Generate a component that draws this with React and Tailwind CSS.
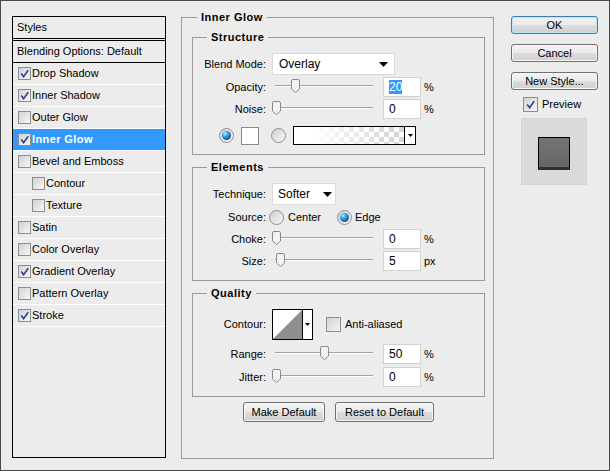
import React from 'react';

const items = [
  { label: 'Drop Shadow', checked: true },
  { label: 'Inner Shadow', checked: true },
  { label: 'Outer Glow' },
  { label: 'Inner Glow', checked: true, active: true },
  { label: 'Bevel and Emboss' },
  { label: 'Contour', indent: true },
  { label: 'Texture', indent: true },
  { label: 'Satin' },
  { label: 'Color Overlay' },
  { label: 'Gradient Overlay', checked: true },
  { label: 'Pattern Overlay' },
  { label: 'Stroke', checked: true },
];

function CheckMark() {
  return (
    <svg width="9" height="9" viewBox="0 0 9 9" className="block">
      <path d="M1.2 4.6 L3.6 7.6 L8.2 1.2" fill="none" stroke="#2c3f98" strokeWidth="1.6" />
    </svg>
  );
}

function Check({ on, big }) {
  return (
    <span
      className={`flex shrink-0 items-center justify-center border border-[#8d8d8d] bg-[linear-gradient(135deg,#d2d2d2,#f6f6f6)] ${
        big ? 'h-[15px] w-[15px]' : 'h-[13px] w-[13px]'
      }`}
    >
      {on && <CheckMark />}
    </span>
  );
}

function Radio({ on }) {
  return (
    <span className="flex h-[15px] w-[15px] shrink-0 items-center justify-center rounded-full border border-[#8e8f8f] bg-[linear-gradient(135deg,#cfcfcf,#f8f8f8)]">
      {on && (
        <span className="h-[9px] w-[9px] rounded-full bg-[radial-gradient(circle_at_35%_30%,#c8ecff_0%,#40a6e6_30%,#0c5f9c_70%,#073a63_100%)]" />
      )}
    </span>
  );
}

function Tri({ w = 9, h = 5 }) {
  return (
    <svg width={w} height={h} viewBox={`0 0 ${w} ${h}`} className="block shrink-0">
      <polygon points={`0,0 ${w},0 ${w / 2},${h}`} fill="#000" />
    </svg>
  );
}

function Legend({ children, outer }) {
  return (
    <span
      className={`absolute -top-[8px] bg-[#ececec] px-[4px] font-bold leading-[14px] tracking-[0.5px] ${
        outer ? 'left-[15px]' : 'left-[14px]'
      }`}
    >
      {children}
    </span>
  );
}

function Group({ title, className, children }) {
  return (
    <div className={`relative flex w-[293px] shrink-0 flex-col border border-[#9b9b9b] pt-[15px] ${className}`}>
      <Legend>{title}</Legend>
      {children}
    </div>
  );
}

function Label({ children }) {
  return <span className="w-[73px] shrink-0 text-right">{children}</span>;
}

function Field({ value, selected }) {
  return (
    <div className="ml-[7px] flex h-[20px] w-[38px] shrink-0 items-center border border-[#d2d2d2] bg-white pl-[5px] text-[12px]">
      {selected ? <span className="bg-[#3399ff] leading-[14px] text-white">{value}</span> : value}
    </div>
  );
}

function Slider({ pos }) {
  return (
    <div className="relative ml-[6px] h-[20px] w-[104px] shrink-0">
      <div className="absolute left-[3px] top-[8px] h-[2px] w-[98px] border-t border-[#a3a3a3] bg-white" />
      <svg className="absolute top-[2px]" style={{ left: pos }} width="9" height="14" viewBox="0 0 9 14">
        <path
          d="M2 .5h5a1.5 1.5 0 0 1 1.5 1.5v8L4.5 13.5.5 10V2A1.5 1.5 0 0 1 2 .5z"
          fill="#f2f2f2"
          stroke="#8a8a8a"
        />
      </svg>
    </div>
  );
}

function SliderRow({ label, pos, value, unit, selected, className = '' }) {
  return (
    <div className={`flex h-[20px] items-center ${className}`}>
      <Label>{label}</Label>
      <Slider pos={pos} />
      <Field value={value} selected={selected} />
      <span className="ml-[3px]">{unit}</span>
    </div>
  );
}

function Btn({ children, className = '', primary }) {
  return (
    <button
      className={`flex items-center justify-center rounded-[3px] border bg-[linear-gradient(#f2f2f2,#ebebeb_50%,#dddddd_50%,#cfcfcf)] text-[11px] leading-[13px] text-black ${
        primary
          ? 'border-[#3c7fb1] shadow-[inset_0_0_0_1px_#bde5f8]'
          : 'border-[#707070] shadow-[inset_0_0_0_1px_#f8f8f8]'
      } ${className}`}
    >
      {children}
    </button>
  );
}

export default function App() {
  return (
    <div className="flex h-[471px] w-[610px] border border-[#4a4a4a] bg-[#ececec] pl-[11px] pt-[15px] font-['Liberation_Sans',Arial,sans-serif] text-[11px] leading-[13px] text-black">
      {/* Styles list */}
      <div className="flex h-[442px] w-[154px] shrink-0 flex-col border border-black">
        <div className="flex h-[22px] shrink-0 items-center border-b border-black pl-[4px]">Styles</div>
        <div className="mt-[1px] flex h-[23px] shrink-0 items-center border-y border-black pl-[4px]">
          Blending Options: Default
        </div>
        {items.map((it) => (
          <div
            key={it.label}
            className={`flex h-[22px] shrink-0 items-center border-b border-white ${
              it.indent ? 'pl-[19px]' : 'pl-[5px]'
            } ${it.active ? 'bg-[#3399ff] font-bold tracking-[0.4px] text-white' : ''}`}
          >
            <Check on={it.checked} />
            <span className="ml-[1px]">{it.label}</span>
          </div>
        ))}
      </div>

      {/* Inner Glow settings */}
      <div className="relative ml-[15px] mt-[1px] flex h-[442px] w-[313px] shrink-0 flex-col border border-[#9b9b9b] pl-[10px] pt-[19px]">
        <Legend outer>Inner Glow</Legend>

        <Group title="Structure" className="h-[118px]">
          <div className="flex h-[22px] items-center">
            <Label>Blend Mode:</Label>
            <div className="ml-[6px] flex h-[22px] w-[123px] items-center justify-between border border-[#dadada] bg-white pl-[6px] pr-[6px] text-[12px]">
              <span>Overlay</span>
              <Tri />
            </div>
          </div>
          <SliderRow className="mt-[2px]" label="Opacity:" pos={19} value="20" unit="%" selected />
          <SliderRow className="mt-[2px]" label="Noise:" pos={0} value="0" unit="%" />
          <div className="mt-[7px] flex h-[19px] items-center pl-[26px]">
            <Radio on />
            <span className="ml-[7px] h-[18px] w-[18px] border border-[#8a8a8a] bg-white" />
            <span className="ml-[12px]">
              <Radio />
            </span>
            <div className="ml-[7px] flex h-[19px] w-[123px] border border-black">
              <div className="flex-1 bg-[linear-gradient(to_right,#ffffff_15%,rgba(255,255,255,0)_90%),repeating-conic-gradient(#d6d6d6_0%_25%,#ffffff_0%_50%)] bg-[length:100%_100%,10px_10px]" />
              <div className="flex w-[11px] items-center justify-center border-l border-black bg-white">
                <Tri w={5} h={3} />
              </div>
            </div>
          </div>
        </Group>

        <Group title="Elements" className="mt-[12px] h-[114px]">
          <div className="flex h-[22px] items-center">
            <Label>Technique:</Label>
            <div className="ml-[6px] flex h-[22px] w-[64px] items-center justify-between border border-[#dadada] bg-white pl-[5px] pr-[3px] text-[12px]">
              <span>Softer</span>
              <Tri />
            </div>
          </div>
          <div className="mt-[3px] flex h-[18px] items-center">
            <Label>Source:</Label>
            <div className="ml-[3px] flex w-[68px] items-center">
              <Radio />
              <span className="ml-[4px]">Center</span>
            </div>
            <Radio on />
            <span className="ml-[3px]">Edge</span>
          </div>
          <SliderRow className="mt-[3px]" label="Choke:" pos={0} value="0" unit="%" />
          <SliderRow className="mt-[2px]" label="Size:" pos={4} value="5" unit="px" />
        </Group>

        <Group title="Quality" className="mt-[12px] h-[104px]">
          <div className="flex h-[31px] items-center">
            <Label>Contour:</Label>
            <div className="ml-[6px] flex h-[31px] w-[41px] border border-black">
              <svg width="29" height="29" viewBox="0 0 29 29" className="block bg-white">
                <polygon points="0,29 29,0 29,29" fill="#8e8e8e" />
              </svg>
              <div className="flex flex-1 items-center justify-center border-l border-black bg-white">
                <Tri w={5} h={3} />
              </div>
            </div>
            <span className="ml-[13px]">
              <Check big />
            </span>
            <span className="ml-[4px]">Anti-aliased</span>
          </div>
          <SliderRow className="mt-[4px]" label="Range:" pos={48} value="50" unit="%" />
          <SliderRow className="mt-[3px]" label="Jitter:" pos={0} value="0" unit="%" />
        </Group>

        <div className="ml-[51px] mt-[5px] flex gap-[10px]">
          <Btn className="h-[20px] w-[82px]">Make Default</Btn>
          <Btn className="h-[20px] w-[99px]">Reset to Default</Btn>
        </div>
      </div>

      {/* Right buttons */}
      <div className="ml-[17px] flex w-[87px] shrink-0 flex-col">
        <Btn primary className="h-[18px] w-[87px]">OK</Btn>
        <Btn className="mt-[10px] h-[18px] w-[87px]">Cancel</Btn>
        <Btn className="mt-[10px] h-[18px] w-[87px]">New Style...</Btn>
        <div className="ml-[12px] mt-[7px] flex items-center">
          <Check on big />
          <span className="ml-[4px]">Preview</span>
        </div>
        <div className="ml-[10px] mt-[6px] flex h-[67px] w-[66px] border border-[#d4d4d4] bg-[#dadada] pl-[16px] pt-[18px]">
          <div className="h-[33px] w-[32px] border border-b-[3px] border-black border-b-[#2b303a] bg-[linear-gradient(#747474,#676767)]" />
        </div>
      </div>
    </div>
  );
}
